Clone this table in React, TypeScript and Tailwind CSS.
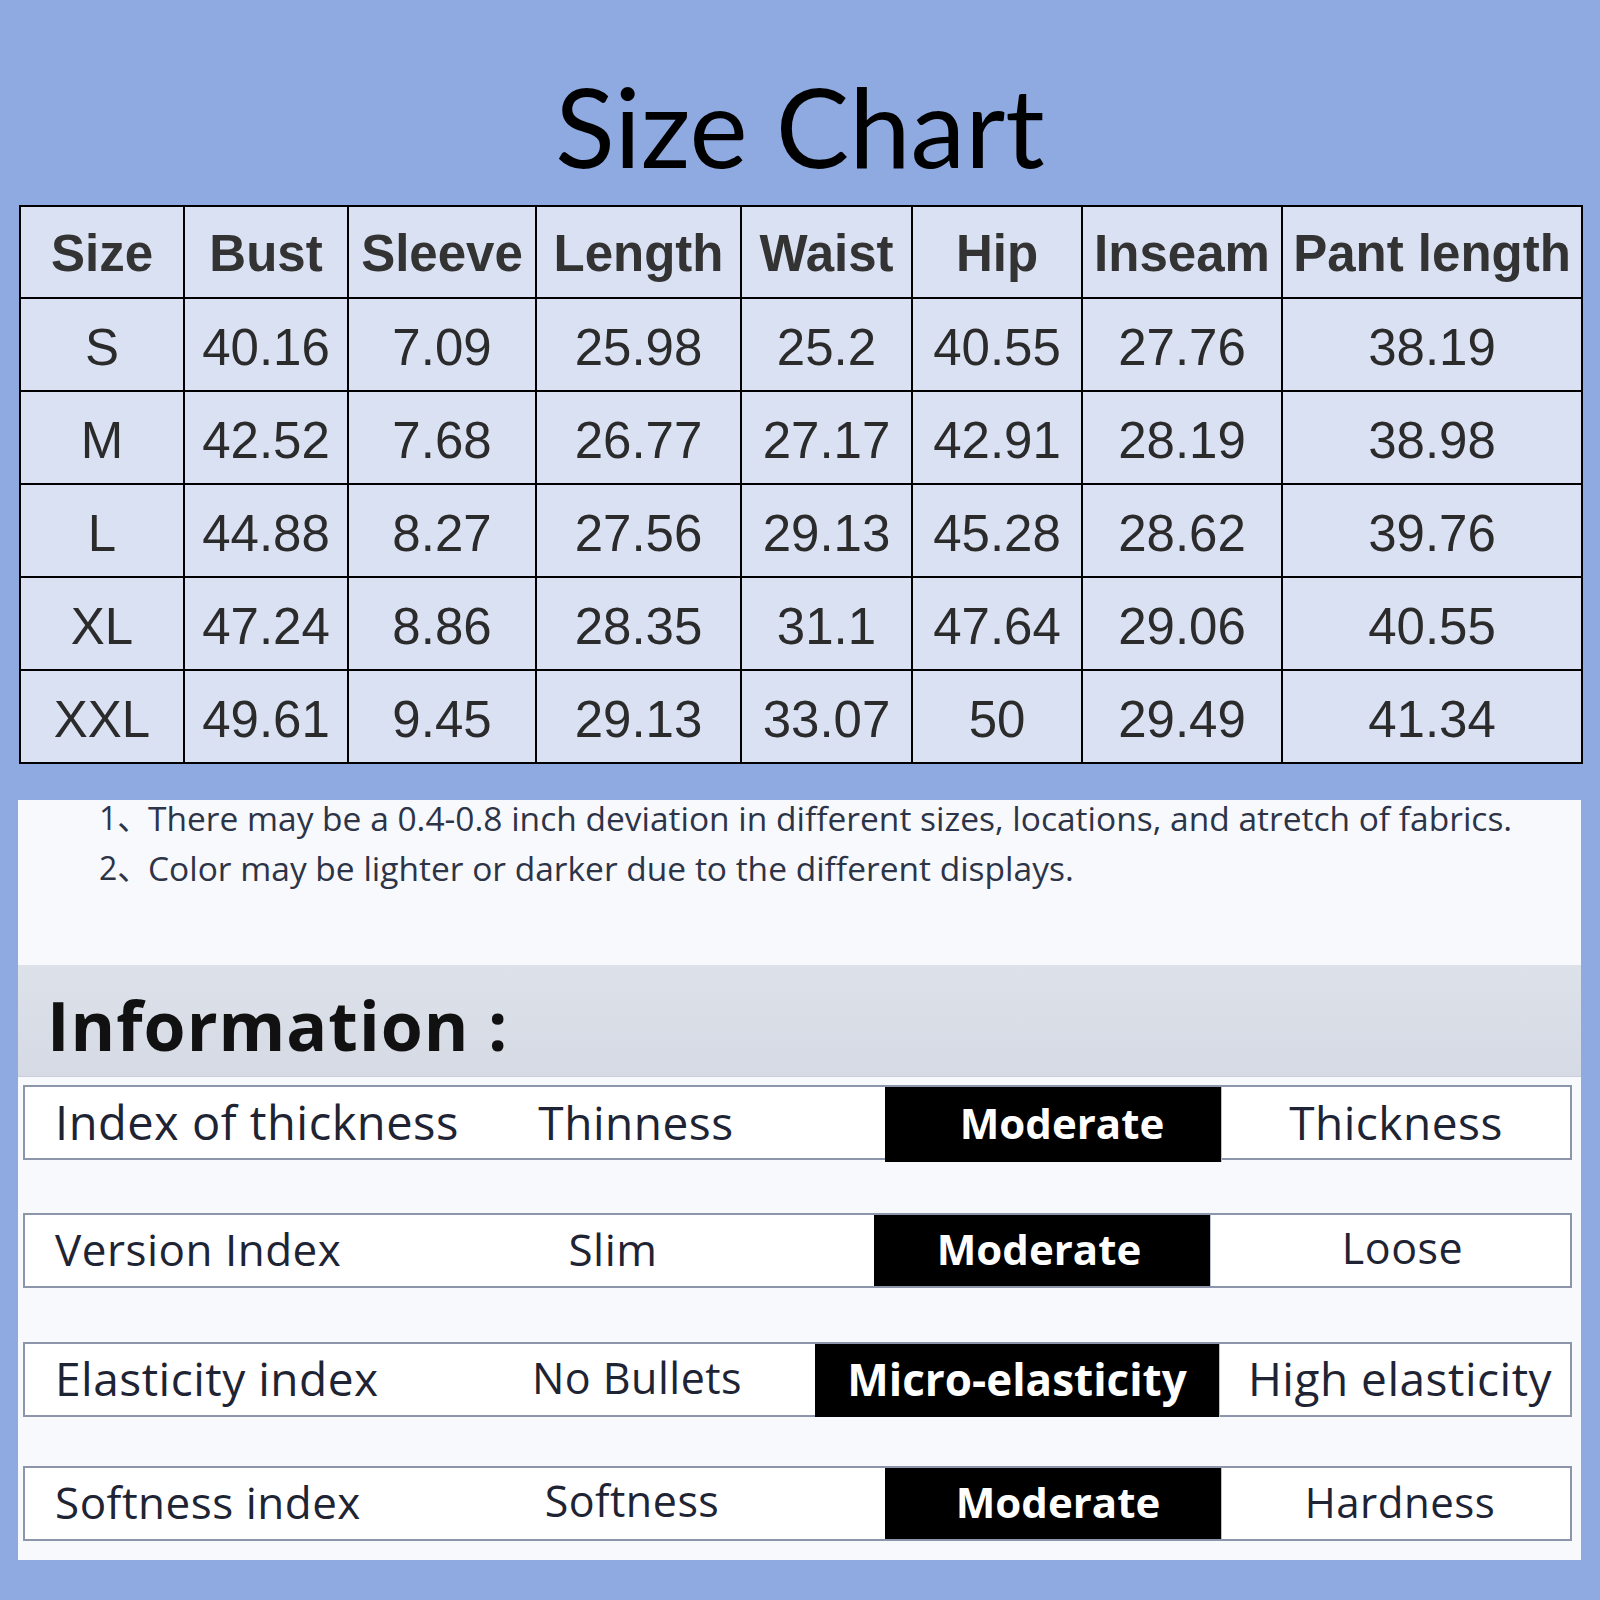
import React from "react";

const headers = ["Size", "Bust", "Sleeve", "Length", "Waist", "Hip", "Inseam", "Pant length"];
const colWidths = ["w-[164px]", "w-[164px]", "w-[188px]", "w-[205px]", "w-[171px]", "w-[170px]", "w-[200px]", "w-[300px]"];

const rows = [
  ["S", "40.16", "7.09", "25.98", "25.2", "40.55", "27.76", "38.19"],
  ["M", "42.52", "7.68", "26.77", "27.17", "42.91", "28.19", "38.98"],
  ["L", "44.88", "8.27", "27.56", "29.13", "45.28", "28.62", "39.76"],
  ["XL", "47.24", "8.86", "28.35", "31.1", "47.64", "29.06", "40.55"],
  ["XXL", "49.61", "9.45", "29.13", "33.07", "50", "29.49", "41.34"],
];

const info = [
  {
    label: "Index of thickness", a: "Thinness", b: "Moderate", c: "Thickness",
    grid: "grid-cols-[362px_498px_336px_1fr]", mt: "mt-[8px]",
    ls: "text-[47px]", as: "text-[46px]", bs: "text-[42px] pl-[18px]", cs: "text-[46px]",
  },
  {
    label: "Version Index", a: "Slim", b: "Moderate", c: "Loose",
    grid: "grid-cols-[327px_522px_336px_1fr]", mt: "mt-[53px]",
    ls: "text-[44px]", as: "text-[44px]", bs: "text-[42px] pr-[6px]", cs: "text-[43px] pl-[24px]",
  },
  {
    label: "Elasticity index", a: "No Bullets", b: "Micro-elasticity", c: "High elasticity",
    grid: "grid-cols-[434px_356px_404px_1fr]", mt: "mt-[54px]",
    ls: "text-[46px]", as: "text-[43px]", bs: "text-[44px]", cs: "text-[46px] pl-[10px]",
  },
  {
    label: "Softness index", a: "Softness", b: "Moderate", c: "Hardness",
    grid: "grid-cols-[354px_506px_336px_1fr]", mt: "mt-[49px]",
    ls: "text-[44px]", as: "text-[43px]", bs: "text-[42px] pl-[10px]", cs: "text-[42px] pl-[8px]",
  },
];

const humanist = { fontFamily: "'Open Sans', 'Noto Sans', sans-serif" };

export default function App() {
  return (
    <div className="w-[1600px] h-[1600px] bg-[#8eaae0] overflow-hidden">
      {/* title */}
      <div className="h-[205px] pt-[70px] text-center">
        <h1
          className="text-[110px] leading-none text-black"
          style={{ fontFamily: "Lato, 'Open Sans', sans-serif" }}
        >
          Size Chart
        </h1>
      </div>

      {/* size table */}
      <table
        className="ml-[19px] w-[1562px] border-collapse border-2 border-black bg-[#dae1f3] table-fixed"
        style={{ fontFamily: "'Liberation Sans', Arial, sans-serif" }}
      >
        <colgroup>
          {colWidths.map((w, i) => (
            <col key={i} className={w} />
          ))}
        </colgroup>
        <thead>
          <tr className="h-[92px]">
            {headers.map((h) => (
              <th
                key={h}
                className="border-2 border-black p-0 pt-[4px] text-center text-[51px] font-bold text-[#333333] whitespace-nowrap"
              >
                {h}
              </th>
            ))}
          </tr>
        </thead>
        <tbody>
          {rows.map((r) => (
            <tr key={r[0]} className="h-[93px]">
              {r.map((v, i) => (
                <td
                  key={i}
                  className="border-2 border-black p-0 pt-[7px] text-center text-[51px] text-[#2b2b2b] whitespace-nowrap"
                >
                  {v}
                </td>
              ))}
            </tr>
          ))}
        </tbody>
      </table>

      {/* notes + information panel */}
      <div className="ml-[18px] mt-[36px] w-[1563px] h-[760px] bg-[#f8f9fc]" style={humanist}>
        <div className="pl-[81px] text-[#2d3448] text-[33.5px]">
          <div className="flex h-[36px] items-center whitespace-nowrap">
            <span className="w-[49px] text-[32px]" style={{ fontFamily: "'Open Sans', 'Noto Sans CJK SC', sans-serif" }}>1、</span>
            <span>There may be a 0.4-0.8 inch deviation in different sizes, locations, and atretch of fabrics.</span>
          </div>
          <div className="mt-[14px] flex h-[36px] items-center whitespace-nowrap">
            <span className="w-[49px] text-[32px]" style={{ fontFamily: "'Open Sans', 'Noto Sans CJK SC', sans-serif" }}>2、</span>
            <span>Color may be lighter or darker due to the different displays.</span>
          </div>
        </div>

        <div className="mt-[79px] h-[112px] bg-gradient-to-b from-[#dde1ea] to-[#d6dae4] border-b border-[#c9ceda] flex items-center pl-[29px] pt-[8px]">
          <span className="text-[68px] font-bold tracking-[1px] text-[#111111] leading-none">Information :</span>
        </div>

        {info.map((row) => (
          <div
            key={row.label}
            className={`${row.mt} mx-[5px] w-[1549px] h-[75px] border-2 border-[#8c95aa] bg-white grid ${row.grid} text-[#1e2434]`}
          >
            <div className={`flex items-center pb-[4px] pl-[30px] tracking-[0.5px] whitespace-nowrap ${row.ls}`}>{row.label}</div>
            <div className={`flex items-center justify-center pb-[4px] tracking-[0.5px] whitespace-nowrap ${row.as}`}>{row.a}</div>
            <div className={`flex items-center justify-center pb-[4px] bg-black text-white font-bold whitespace-nowrap ${row.bs}`}>{row.b}</div>
            <div className={`flex items-center justify-center pb-[4px] tracking-[0.5px] whitespace-nowrap border-l border-[#b8bfcd] ${row.cs}`}>{row.c}</div>
          </div>
        ))}
      </div>
    </div>
  );
}
